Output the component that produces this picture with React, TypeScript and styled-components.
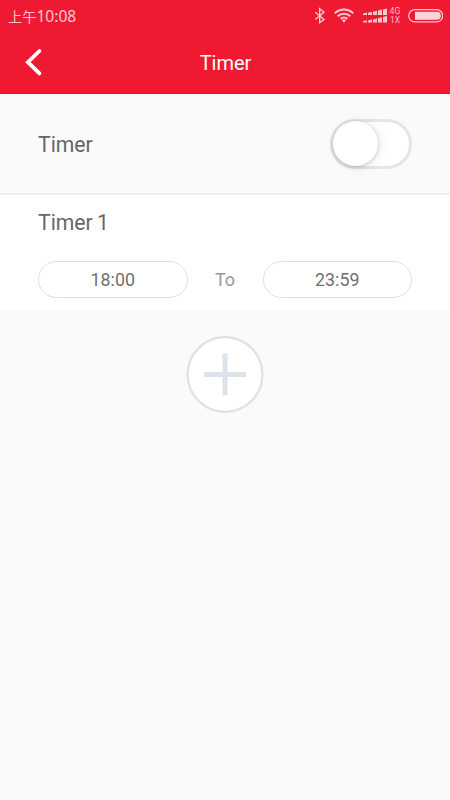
import React from 'react';
import styled, { createGlobalStyle } from 'styled-components';

const GlobalStyle = createGlobalStyle`
  * { box-sizing: border-box; }
  body { margin: 0; background: #fafafa; font-family: Roboto, "Noto Sans CJK SC", sans-serif; }
  button { font: inherit; color: inherit; padding: 0; border: 0; background: none; }
`;

const Screen = styled.div`
  display: flex;
  flex-direction: column;
  min-height: 800px;
  background: #fafafa;
`;

const Top = styled.header`
  height: 94px;
  background: #ef1a32;
  border-bottom: 1px solid #e5142b;
  color: #fff;
`;

const StatusBar = styled.div`
  height: 32px;
  padding: 0 7px 0 8px;
  display: flex;
  justify-content: space-between;
  align-items: center;
`;

const Clock = styled.span`
  display: flex;
  align-items: center;
  font-family: "Noto Sans CJK SC", sans-serif;
  font-size: 14.2px;
  line-height: 32px;
  color: #fcc7cd;
`;

const ClockDigits = styled.span`
  font-family: "Noto Sans", sans-serif;
  font-size: 15.6px;
  line-height: 32px;
`;

const StatusIcons = styled.svg`
  display: block;
  width: 130px;
  height: 32px;
`;

const NavBar = styled.div`
  height: 61px;
  padding: 0 25px;
  display: grid;
  grid-template-columns: 40px 1fr 40px;
  align-items: center;
`;

const BackButton = styled.button`
  display: block;
  width: 18px;
  height: 30px;
`;

const Title = styled.h1`
  margin: 0;
  text-align: center;
  font-size: 20px;
  line-height: 30px;
  font-weight: 400;
  padding: 1px 0 0 1px;
`;

const SwitchRow = styled.section`
  height: 101px;
  padding: 0 38px;
  display: flex;
  align-items: center;
  justify-content: space-between;
  border-bottom: 2px solid #eeeeee;
`;

const Label = styled.h2`
  margin: 0;
  padding-top: 2px;
  font-size: 21.2px;
  line-height: 30px;
  font-weight: 400;
  word-spacing: -1px;
  color: #666;
`;

const Toggle = styled.button`
  width: 82px;
  height: 50px;
  padding: 0;
  display: flex;
  align-items: center;
  border-radius: 25px;
  border: 3px solid #e5e5e5;
  background: #fff;
`;

const Knob = styled.span`
  flex: none;
  width: 45px;
  height: 45px;
  margin-left: -0.5px;
  border-radius: 50%;
  background: #fff;
  box-shadow: 0 1px 4px rgba(0, 0, 0, 0.2), 2px 1px 12px rgba(0, 0, 0, 0.07);
`;

const TimerCard = styled.section`
  height: 115px;
  padding: 11px 38px 0;
  background: #fff;
`;

const Range = styled.div`
  margin-top: 23px;
  display: grid;
  grid-template-columns: 149.5px 1fr 149.5px;
  align-items: center;
`;

const TimeField = styled.button`
  height: 37px;
  border: 1px solid #d9e1e8;
  border-radius: 18.5px;
  background: #fff;
  color: #707070;
  font-size: 17.8px;
  line-height: 35px;
`;

const To = styled.span`
  text-align: center;
  font-size: 18px;
  line-height: 37px;
  color: #999;
`;

const AddButton = styled.button`
  width: 78px;
  height: 78px;
  margin: 26px auto 0;
  svg { display: block; }
`;

const signalHeights = [2, 2.8, 3.8, 5, 6.2];

function SystemIcons() {
  return (
    <StatusIcons viewBox="313 0 130 32" fill="none">
      <path d="M315.3 12.2 324 19.5 319.7 22.7V8.8L324 12.2 315.3 19.5" stroke="#fcc7cd" strokeWidth="1.4" />
      <g stroke="#fcc7cd" strokeWidth="2">
        <path d="M334.7 13.4C340 8.2 348 8.2 353.3 13.4" />
        <path d="M337.7 16.2C341.3 12.8 346.7 12.8 350.3 16.2" />
        <path d="M340.6 18.9C342.8 17.2 345.2 17.2 347.4 18.9" />
      </g>
      <path d="M341.8 20.1Q344 18.8 346.2 20.1L344 22.7Z" fill="#fcc7cd" />
      {[15, 22.6].map((base) =>
        signalHeights.map((h, i) => (
          <path
            key={`${base}-${i}`}
            d={`M${363 + i * 5} ${base}V${base - h + 0.6}L${367 + i * 5} ${base - h - 0.4}V${base}Z`}
            fill="#fcc7cd"
          />
        )),
      )}
      <g fill="#fcb8c0" fontFamily="Roboto" fontSize="8.6">
        <text x="389.5" y="14.2" textLength="11" lengthAdjust="spacingAndGlyphs">4G</text>
        <text x="390" y="22.7" textLength="10" lengthAdjust="spacingAndGlyphs">1X</text>
      </g>
      <rect x="408.7" y="9.7" width="34" height="12.2" rx="6.1" stroke="#fcc7cd" strokeWidth="1.3" />
      <path d="M415 11.8H436.8A4 4 0 0 1 436.8 19.8H415Z" fill="#fdd3d8" />
    </StatusIcons>
  );
}

export default function App() {
  return (
    <>
      <GlobalStyle />
      <Screen>
        <Top>
          <StatusBar>
            <Clock>
              上午<ClockDigits>10:08</ClockDigits>
            </Clock>
            <SystemIcons />
          </StatusBar>
          <NavBar>
            <BackButton aria-label="Back">
              <svg width="18" height="30" viewBox="0 0 18 30" fill="none">
                <path d="M14.4 3 2.9 14.2 14.4 25.4" stroke="#fff" strokeWidth="3.8" strokeLinecap="round" strokeLinejoin="miter" />
              </svg>
            </BackButton>
            <Title>Timer</Title>
          </NavBar>
        </Top>
        <SwitchRow>
          <Label>Timer</Label>
          <Toggle role="switch" aria-checked={false} aria-label="Timer">
            <Knob />
          </Toggle>
        </SwitchRow>
        <TimerCard>
          <Label>Timer 1</Label>
          <Range>
            <TimeField>18:00</TimeField>
            <To>To</To>
            <TimeField>23:59</TimeField>
          </Range>
        </TimerCard>
        <AddButton aria-label="Add timer">
          <svg width="78" height="78" viewBox="0 0 78 78">
            <circle cx="39" cy="38.5" r="37.4" fill="#fff" stroke="#dce3ea" strokeWidth="2.4" />
            <path d="M39 17.2V59.2M18 38.5H60" stroke="#dce3ea" strokeWidth="5" />
          </svg>
        </AddButton>
      </Screen>
    </>
  );
}
